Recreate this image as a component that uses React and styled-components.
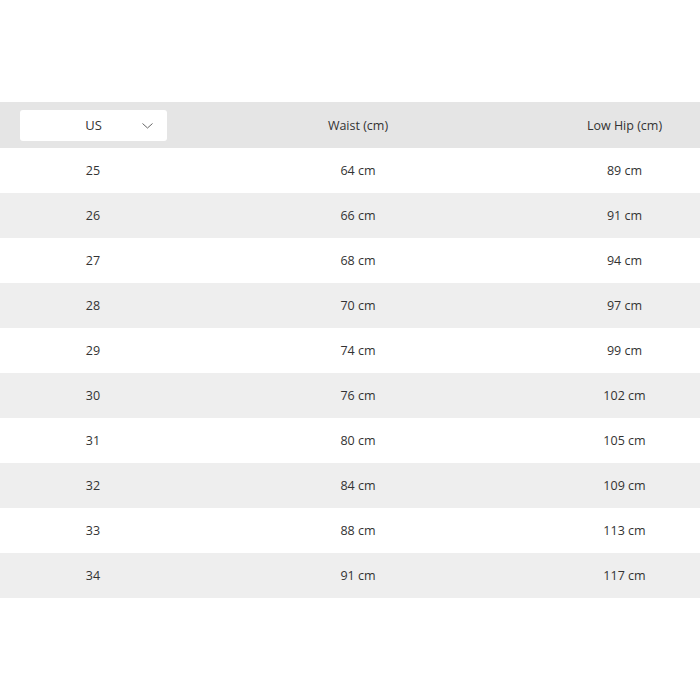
import React from "react";
import styled, { createGlobalStyle } from "styled-components";

const Global = createGlobalStyle`
  html, body { margin: 0; padding: 0; background: #fff; }
  body { font-family: "Open Sans", "Lato", sans-serif; }
`;

const Page = styled.div`
  width: 700px;
  height: 700px;
  padding-top: 102px;
  box-sizing: border-box;
  background: #fff;
`;

const Row = styled.div`
  display: grid;
  grid-template-columns: 186px 344px 1fr;
  height: ${(p) => (p.$header ? 46 : 45)}px;
  align-items: center;
  background: ${(p) => (p.$header ? "#e5e5e5" : p.$shade ? "#eeeeee" : "#ffffff")};
  color: #333;
  font-size: 12.5px;
`;

const Cell = styled.div`
  text-align: center;
  padding-left: ${(p) => (p.$last ? 19 : 0)}px;
`;

const SelectWrap = styled.div`
  display: flex;
  justify-content: flex-start;
  padding-left: 20px;
`;

const Select = styled.div`
  width: 147px;
  height: 31px;
  background: #fff;
  border-radius: 3px;
  position: relative;
  display: flex;
  align-items: center;
  justify-content: center;
  font-size: 13px;
  color: #333;
`;

const Chevron = styled.svg`
  position: absolute;
  right: 14px;
  top: 13px;
`;

const data = [
  [25, 64, 89],
  [26, 66, 91],
  [27, 68, 94],
  [28, 70, 97],
  [29, 74, 99],
  [30, 76, 102],
  [31, 80, 105],
  [32, 84, 109],
  [33, 88, 113],
  [34, 91, 117],
];

export default function App() {
  return (
    <Page>
      <Global />
      <Row $header>
        <SelectWrap>
          <Select>
            US
            <Chevron width="11" height="6" viewBox="0 0 11 6">
              <path d="M0.5 0.5 L5.5 5 L10.5 0.5" fill="none" stroke="#666" strokeWidth="1" />
            </Chevron>
          </Select>
        </SelectWrap>
        <Cell>Waist (cm)</Cell>
        <Cell $last>Low Hip (cm)</Cell>
      </Row>
      {data.map(([us, w, h], i) => (
        <Row key={us} $shade={i % 2 === 1}>
          <Cell>{us}</Cell>
          <Cell>{w} cm</Cell>
          <Cell $last>{h} cm</Cell>
        </Row>
      ))}
    </Page>
  );
}
